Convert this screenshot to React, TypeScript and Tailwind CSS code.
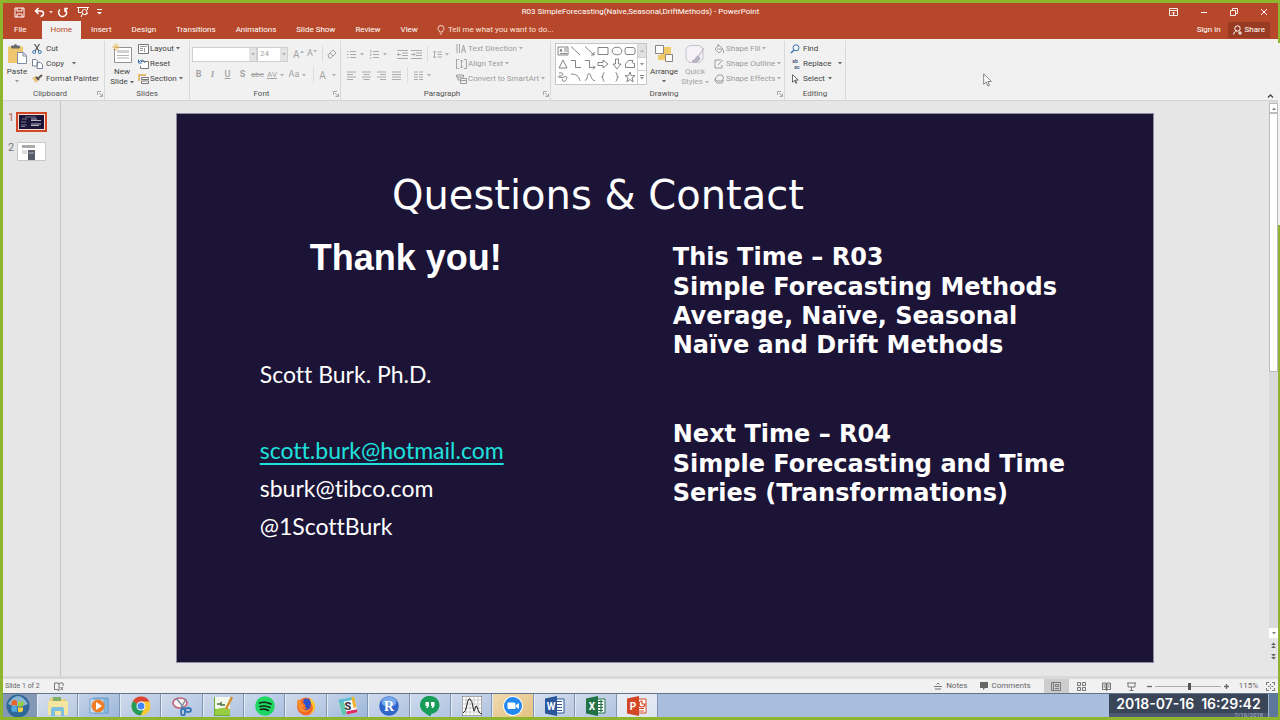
import type { ReactNode } from "react";

const ui = "font-['Roboto','Open_Sans',sans-serif]";

function Ico({ children, w = 12, h = 12, className = "", fill = "none" }: { children: ReactNode; w?: number; h?: number; className?: string; fill?: string }) {
    return (
        <svg width={w} height={h} viewBox={`0 0 ${w} ${h}`} fill={fill} stroke="currentColor" className={`shrink-0 ${className}`} aria-hidden="true">
            {children}
        </svg>
    );
}

function Caret({ className = "" }: { className?: string }) {
    return (
        <svg width="4" height="3" viewBox="0 0 4 3" className={`shrink-0 opacity-80 ${className}`} aria-hidden="true">
            <path d="M0 0h4L2 2.4z" fill="currentColor" />
        </svg>
    );
}

function Group({ label, width, launcher, children }: { label: string; width: string; launcher?: boolean; children: ReactNode }) {
    return (
        <section className={`flex flex-col shrink-0 border-r border-[#d9d9d9] ${width}`}>
            <div className="flex h-[47px]">{children}</div>
            <div className="flex h-[13px] items-center">
                <h2 className="flex-1 pt-px text-center text-[#555]">{label}</h2>
                {launcher && (
                    <button aria-label={`${label} settings`} className="mr-px pt-px text-[#888]">
                        <Ico w={6} h={6}><path d="M.5 4V.5H4M2 2l3 3M5.500 2.500v3h-3" strokeWidth=".7" /></Ico>
                    </button>
                )}
            </div>
        </section>
    );
}

function Item({ icon, text, caret, gap = "gap-1", far }: { icon: ReactNode; text: string; caret?: boolean; gap?: string; far?: boolean }) {
    return (
        <button className={`flex h-[15px] items-center whitespace-nowrap ${gap}`}>
            <span className="flex w-3 shrink-0 justify-center">{icon}</span>
            <span>{text}</span>
            {caret && <Caret className={far ? "ml-[5px]" : "ml-px"} />}
        </button>
    );
}

const tabs = ["Insert", "Design", "Transitions", "Animations", "Slide Show", "Review", "View"];

function TitleBar() {
    return (
        <header className="flex h-[18px] items-center bg-[#b7472a] text-white">
            <div className="flex w-[200px] items-center pl-[11px]">
                <button aria-label="Save"><Ico w={11} h={11}><path d="M1 1h9v9H1zM3 1v3h5V1M3 10V7h5v3" /></Ico></button>
                <button aria-label="Undo" className="ml-[9px]"><Ico w={11} h={11}><path d="M4.500 1L1.500 4l3 3M2 4h4.500c4 0 4 5 0 5.500" strokeWidth="1.500" /></Ico></button>
                <Caret className="ml-1" />
                <button aria-label="Repeat" className="ml-1"><Ico w={11} h={11}><path d="M3 2.500a4 4 0 1 0 4.500-.5M8 5V1.500h3" strokeWidth="1.500" /></Ico></button>
                <button aria-label="Start from beginning" className="ml-[9px]"><Ico w={12} h={12}><path d="M0 1.500h12M1.500 2v4.500h3M10.500 2v2M4 11l2-4" /><circle cx="7.500" cy="6" r="2.500" /><path d="M8 9l3-2" /></Ico></button>
                <button aria-label="Customize toolbar" className="ml-2"><Ico w={5} h={6}><path d="M0 .5h5" /><path d="M0 3h5L2.500 5.500z" fill="currentColor" stroke="none" /></Ico></button>
            </div>
            <h1 className="flex-1 text-center text-[8px]">R03 SimpleForecasting(Naive,Seasonal,DriftMethods) - PowerPoint</h1>
            <div className="flex w-[200px] items-center justify-end gap-[22px] pr-[10px]">
                <button aria-label="Ribbon display options"><Ico w={9} h={8}><path d="M.5.5h8v7h-8zM.5 2.500h8M4.500 7V4M3 5.500l1.500-1.500L6 5.500" strokeWidth=".9" /></Ico></button>
                <button aria-label="Minimize"><Ico w={8} h={8}><path d="M1 4.500h6" /></Ico></button>
                <button aria-label="Restore"><Ico w={8} h={8}><path d="M.5 2.500h5v5h-5zM2.500 2.500v-2h5v5h-2" strokeWidth=".9" /></Ico></button>
                <button aria-label="Close"><Ico w={8} h={8}><path d="M1 1l6 6M7 1L1 7" /></Ico></button>
            </div>
        </header>
    );
}

function TabBar() {
    return (
        <nav className="flex h-[18px] items-center bg-[#b7472a] text-[8px] text-white">
            <button className="h-full px-[11px]">File</button>
            <button className="ml-1 h-full bg-[#f1f1f1] px-[9px] text-[#b7472a]">Home</button>
            {tabs.map((t) => (
                <button key={t} className="h-full whitespace-nowrap px-[10px]">{t}</button>
            ))}
            <label className="ml-[9px] flex items-center gap-[3px] text-[#fbe3dc]">
                <Ico w={8} h={10}><path d="M2.500 7C2.500 5.500 1 5 1 3.500a3 3 0 0 1 6 0C7 5 5.500 5.500 5.500 7zM3 9h2" strokeWidth=".9" /></Ico>
                <input className="w-[140px] bg-transparent placeholder:text-[#fbe3dc]" placeholder="Tell me what you want to do..." />
            </label>
            <button className="ml-auto mr-[7px]">Sign in</button>
            <button className="mr-2 flex h-4 items-center gap-[3px] bg-[#983b22] px-[5px]">
                <Ico w={9} h={10}><circle cx="4.500" cy="3.500" r="2.700" /><path d="M.7 9.500c0-2 1.300-3.500 3-3.500M5 8h4M7 6v4" /></Ico>
                Share
            </button>
        </nav>
    );
}

const bars = (d: string) => <Ico w={9} h={9}><path d={d} strokeWidth=".9" /></Ico>;

function Drop({ label, value, width }: { label: string; value: string; width: string }) {
    return (
        <div className={`relative h-[15px] ${width}`}>
            <select aria-label={label} disabled defaultValue={value} className="h-full w-full appearance-none border border-[#cfcfcf] bg-white bg-[linear-gradient(#e3e3e3,#e3e3e3)] bg-[length:7px_100%] bg-right bg-no-repeat pl-[2px] opacity-100">
                <option>{value}</option>
            </select>
            <Caret className="pointer-events-none absolute right-[2px] top-[6px]" />
        </div>
    );
}

function FontGroup() {
    return (
        <Group label="Font" width="w-[151px]" launcher>
            <div className="flex flex-col pl-[2px] text-[#a3a3a3]">
                <div className="flex h-[26px] items-center">
                    <Drop label="Font" value="" width="w-[65px]" />
                    <Drop label="Font size" value="24" width="w-[31px]" />
                    <button aria-label="Increase font size" className="ml-[5px] flex w-[14px] items-center text-[10px]">A<Caret className="mb-[6px] rotate-180" /></button>
                    <button aria-label="Decrease font size" className="flex w-[14px] items-center text-[9px]">A<Caret className="mb-[6px]" /></button>
                    <span className="ml-px h-4 border-l border-[#ddd]"></span>
                    <button aria-label="Clear formatting" className="ml-1"><Ico w={10} h={10}><path d="M1 6l5-5 3 3-5 5H2zM3 4l3 3" /></Ico></button>
                </div>
                <div className="flex h-4 items-center text-center text-[9px]">
                    <button className="w-[13px] font-bold">B</button>
                    <button className="w-[15px] font-['Liberation_Serif',serif] font-bold italic">I</button>
                    <button className="w-[15px] font-medium underline">U</button>
                    <button className="w-[15px] font-bold">S</button>
                    <button className="w-[15px] text-[8px] line-through">abc</button>
                    <button className="flex w-[21px] items-center justify-center gap-[3px] text-[8px]"><span className="underline">AV</span><Caret /></button>
                    <button className="flex w-[23px] items-center justify-center gap-[3px]">Aa<Caret /></button>
                    <span className="ml-1 h-4 border-l border-[#ddd]"></span>
                    <button className="flex w-[27px] items-center justify-center gap-[6px] text-[10px]">A<Caret /></button>
                </div>
            </div>
        </Group>
    );
}

function ParagraphGroup() {
    return (
        <Group label="Paragraph" width="w-[210px]" launcher>
            <div className="flex w-[114px] flex-col pl-[6px] text-[#a3a3a3]">
                <div className="flex h-[26px] items-center">
                    <button aria-label="Bullets" className="flex items-center gap-1">{bars("M0 1.500h1.500M0 4.500h1.500M0 7.500h1.500M3 1.500h6M3 4.500h6M3 7.500h6")}<Caret /></button>
                    <button aria-label="Numbering" className="ml-[6px] flex items-center gap-1">{bars("M.8 0v2.500M.8 3.500v2.500M.8 7v2M3 1.500h6M3 4.500h6M3 7.500h6")}<Caret /></button>
                    <button aria-label="Decrease indent" className="ml-[10px]"><Ico w={11} h={9}><path d="M0 .5h11M5 3h6M5 5.500h6M0 8.500h11M4 4.500H0M2 3L.5 4.500 2 6" strokeWidth=".9" /></Ico></button>
                    <button aria-label="Increase indent" className="ml-[3px]"><Ico w={11} h={9}><path d="M0 .5h11M5 3h6M5 5.500h6M0 8.500h11M0 4.500h4M2.500 3L4 4.500 2.500 6" strokeWidth=".9" /></Ico></button>
                    <span className="mx-[5px] h-4 border-l border-[#ddd]"></span>
                    <button aria-label="Line spacing" className="flex items-center gap-[3px]">{bars("M1.500 1v7M0 2.500L1.500 1 3 2.500M0 6.500L1.500 8 3 6.500M4.500 2h4.500M4.500 4.500h4.500M4.500 7h4.500")}<Caret /></button>
                </div>
                <div className="flex h-4 items-center gap-[6px]">
                    <button aria-label="Align left">{bars("M0 1h9M0 3.500h6M0 6h9M0 8.500h6")}</button>
                    <button aria-label="Center">{bars("M0 1h9M1.500 3.500h6M0 6h9M1.500 8.500h6")}</button>
                    <button aria-label="Align right">{bars("M0 1h9M3 3.500h6M0 6h9M3 8.500h6")}</button>
                    <button aria-label="Justify">{bars("M0 1h9M0 3.500h9M0 6h9M0 8.500h9")}</button>
                    <span className="h-4 border-l border-[#ddd]"></span>
                    <button aria-label="Columns" className="flex items-center gap-1">{bars("M0 1h4M0 3.500h4M0 6h4M0 8.500h4M5 1h4M5 3.500h4M5 6h4M5 8.500h4")}<Caret /></button>
                </div>
            </div>
            <div className="flex flex-col text-[#9c9c9c]">
                <Item caret gap="gap-px" text="Text Direction" icon={<Ico w={10} h={10}><path d="M1 0v9M3.500 0v9M5.500 9L7.500 1l2 8M6 6h3" strokeWidth=".9" /></Ico>} />
                <Item caret gap="gap-px" text="Align Text" icon={<Ico w={11} h={10}><path d="M3 .5H.5v9H3M8 .5h2.500v9H8M5.500 1v8M4 2.500L5.500 1 7 2.500M4 7.500L5.500 9 7 7.500" strokeWidth=".9" /></Ico>} />
                <Item caret gap="gap-px" text="Convert to SmartArt" icon={<Ico w={11} h={10}><path d="M.5 1h7v2h-7zM2 3v3h2M4.500 4.500h6v5h-6zM4.500 6.500h6" /></Ico>} />
            </div>
        </Group>
    );
}

const shapes = [
    ["Text box", "M1 2h10v8H1zM3 7l1-3 1 3M7 4h3M7 6h3M3 8.500h7"],
    ["Line", "M1 1.500L10 10"],
    ["Arrow", "M1 1.500L10 10M10 7v3H7"],
    ["Rectangle", "M1 2.500h10v7H1z"],
    ["Oval", "M6 2.200c6.500 0 6.500 7.600 0 7.600s-6.500-7.600 0-7.600z"],
    ["Rounded rectangle", "M3 2.500h6q2 0 2 2v3q0 2-2 2H3q-2 0-2-2v-3q0-2 2-2z"],
    ["Triangle", "M6 2l4 8H2z"],
    ["Elbow connector", "M1 2.500h4.500v7H11"],
    ["Elbow arrow", "M1 2.500h4.500v7H11M9 7.500l2 2-2 2"],
    ["Right arrow", "M1 4.500h5V2l5 4-5 4V7.500H1z"],
    ["Down arrow", "M4.500 1v5H2l4 5 4-5H7.500V1z"],
    ["Flowchart shape", "M1.500 9.500V6l3-3.500H9q-2 3 1.500 3v4z"],
    ["Freeform", "M2 2c5-1 5 3 1 3s0 3 4 1 3 3 1 4-4-1-2-2"],
    ["Arc", "M1 3c5 0 8 2 9 7"],
    ["Curve", "M1 9.500C4 9 3 2.500 5 2.500S7 10 11 9.500"],
    ["Left brace", "M7.500 1.500Q6 1.500 6 4T4.500 6Q6 6 6 8t1.500 2.500"],
    ["Right brace", "M4.500 1.500Q6 1.500 6 4t1.500 2Q6 6 6 8t-1.500 2.500"],
    ["Star", "M6 1l1.300 3.700H11L8 7l1.200 3.800L6 8.500l-3.200 2.300L4 7 1 4.700h3.700z"],
];

function DrawingGroup() {
    return (
        <Group label="Drawing" width="w-[234px]" launcher>
            <div className="ml-1 mt-[2px] flex h-[42px] border border-[#c6c6c6] bg-white text-[#666]">
                <div className="grid w-[81px] grid-cols-6">
                    {shapes.map(([name, d]) => (
                        <button key={name} aria-label={name} className="flex items-center justify-center"><Ico><path d={d} strokeWidth=".8" /></Ico></button>
                    ))}
                </div>
                <div className="flex w-[9px] flex-col border-l border-[#d0d0d0] text-[#777]">
                    <button aria-label="Previous shapes" className="flex flex-1 items-center justify-center bg-[#e1e1e1] text-[#aaa]"><Caret className="rotate-180" /></button>
                    <button aria-label="Next shapes" className="flex flex-1 items-center justify-center border-y border-[#d0d0d0]"><Caret /></button>
                    <button aria-label="All shapes" className="flex flex-1 flex-col items-center justify-center gap-px"><span className="w-1 border-t border-[#777]"></span><Caret /></button>
                </div>
            </div>
            <button className="flex w-[34px] flex-col items-center pt-[2px] text-[#444]">
                <Ico w={20} h={22}>
                    <path d="M7 4h10v10H7z" fill="#f2c968" stroke="none" />
                    <path d="M1.500 2.500h8v8h-8zM11.500 11.500h7v7h-7z" fill="#fff" stroke="#8d8480" />
                    <path d="M4 12h7v5H4z" fill="#f2c968" stroke="none" />
                </Ico>
                <span className="mt-[2px] leading-[10px]">Arrange</span>
                <Caret className="mt-[3px]" />
            </button>
            <button className="flex w-[28px] flex-col items-center pt-[2px] text-[#a3a3a3]">
                <Ico w={20} h={22}>
                    <rect x="1" y="2.500" width="17" height="17" rx="5" fill="#f4f2f7" stroke="#c5c1cc" />
                    <path d="M19 5l-6 9M13 13c-2 0-2 4-6 5 3 2 7 1 8-3z" fill="#b9b3c6" stroke="#b0abb9" />
                </Ico>
                <span className="mt-[2px] leading-[10px]">Quick</span>
                <span className="flex items-center gap-[2px] leading-[10px]">Styles<Caret /></span>
            </button>
            <div className="ml-1 flex flex-col text-[#9c9c9c]">
                <Item caret gap="gap-px" text="Shape Fill" icon={<Ico w={10} h={10}><path d="M1 5l4-4 4 4-4 4zM3 5h5M4 3V0M9.500 6v3" strokeWidth=".9" /></Ico>} />
                <Item caret gap="gap-px" text="Shape Outline" icon={<Ico w={10} h={10}><path d="M7 1H1v8h7V6M4 6l5-5" /></Ico>} />
                <Item caret gap="gap-px" text="Shape Effects" icon={<Ico w={10} h={10}><path d="M4 1h4l1.500 3L8 7H3L1 5zM1 5v2l2 2h5l1.500-3" /></Ico>} />
            </div>
        </Group>
    );
}

function Ribbon() {
    return (
        <div className="flex h-[62px] border-b border-[#d4d4d4] bg-[#f1f1f1] pt-[2px] text-[8px] text-[#444]">
            <Group label="Clipboard" width="w-[102px]" launcher>
                <button className="flex w-[28px] flex-col items-center pt-[2px]">
                    <Ico w={20} h={22}>
                        <path d="M1 3.500h15V20H1z" fill="#efc76f" stroke="none" />
                        <path d="M4.500 5V3h2q2-3 4 0h2v2z" fill="#6a6a6a" stroke="#6a6a6a" />
                        <path d="M10.500 9.500h6l3 3v8h-9zM16 9.500V13h3" fill="#fff" stroke="#7c8da4" />
                    </Ico>
                    <span className="mt-[2px] leading-[10px]">Paste</span>
                    <Caret className="mt-[3px] text-[#888]" />
                </button>
                <div className="flex flex-col">
                    <Item text="Cut" gap="gap-[3px]" icon={<Ico w={10} h={10}><path d="M2.500 0L7 7M7.500 0L3 7" stroke="#555" strokeWidth="1.200" /><circle cx="2.200" cy="8" r="1.500" stroke="#3c74b4" /><circle cx="7.800" cy="8" r="1.500" stroke="#3c74b4" /></Ico>} />
                    <Item text="Copy" gap="gap-[3px]" caret far icon={<Ico w={11} h={10}><path d="M.5.5H4L5.500 2v5h-5zM5 3.500h3.500l2 2v4H5z" fill="#fff" stroke="#71819c" /></Ico>} />
                    <Item text="Format Painter" gap="gap-[3px]" icon={<Ico w={11} h={10}><path d="M0 4l4-2 3 3-3 4z" fill="#edc27b" stroke="none" /><path d="M4 3l3 3M6 4.500L10 1" stroke="#5b5552" strokeWidth="1.800" /></Ico>} />
                </div>
            </Group>
            <Group label="Slides" width="w-[85px]">
                <button className="flex w-[32px] flex-col items-center pl-[2px] pt-[2px]">
                    <Ico w={20} h={22}>
                        <path d="M2.500 4.500h17v15h-17z" fill="#fff" stroke="#929292" />
                        <path d="M5 7h12v3H5z" fill="#d0d0d0" stroke="none" />
                        <path d="M5 12.500h12M5 15h12" stroke="#b3b3b3" />
                        <path d="M4 0v8M0 4h8M1.500 1.500l5 5M6.500 1.500l-5 5" stroke="#e9bd60" strokeWidth=".9" />
                    </Ico>
                    <span className="mt-[2px] leading-[10px]">New</span>
                    <span className="flex items-center gap-[2px] leading-[10px]">Slide<Caret /></span>
                </button>
                <div className="flex flex-col">
                    <Item caret gap="gap-px" text="Layout" icon={<Ico w={11} h={10}><path d="M.5.5h10v9H.500z" fill="#fff" stroke="#777" /><path d="M2 2.500h7M2 4.500h3M2 6.500h3M6.500 4v4" stroke="#999" /></Ico>} />
                    <Item gap="gap-px" text="Reset" icon={<Ico w={11} h={10}><path d="M3 2.500h7.500v7h-8V7" fill="#fff" stroke="#777" /><path d="M1 3c2-3 6-2 6 1M.5.5V4H4" stroke="#3c74b4" /></Ico>} />
                    <Item caret gap="gap-px" text="Section" icon={<Ico w={11} h={10}><path d="M3.500 3.500h7v2h-7zM3.500 7h7v2.500h-7z" fill="#fff" stroke="#777" /><path d="M0 1h8M1 2v5" stroke="#e0a848" strokeWidth="1.500" /></Ico>} />
                </div>
            </Group>
            <FontGroup />
            <ParagraphGroup />
            <DrawingGroup />
            <Group label="Editing" width="w-[61px]">
                <div className="flex flex-col pl-1">
                    <Item gap="gap-[2px]" text="Find" icon={<Ico w={10} h={10}><circle cx="6" cy="3.800" r="3" stroke="#3f73b0" /><path d="M4 6L1 9" stroke="#3f73b0" strokeWidth="1.500" /></Ico>} />
                    <Item gap="gap-[2px]" caret far text="Replace" icon={<span className="flex flex-col text-[5px] font-bold leading-[6px] text-[#4d5b7c]"><span>ab</span><span className="pl-1">ac</span></span>} />
                    <Item gap="gap-[2px]" caret text="Select" icon={<Ico w={8} h={10}><path d="M1.500.8v7.500l2-2 1.300 3 1-.5-1.300-2.800h2.700z" strokeWidth=".8" fill="#fff" /></Ico>} />
                </div>
            </Group>
            <button aria-label="Collapse the ribbon" className="mb-px ml-auto mr-1 self-end"><Ico w={7} h={6}><path d="M1 4.500L3.500 2 6 4.500" strokeWidth="1.300" /></Ico></button>
        </div>
    );
}

function Thumbnails() {
    return (
        <aside className="flex w-[58px] shrink-0 flex-col gap-[10px] border-r border-[#c6c6c6] pl-[5px] pt-[11px] text-[11px] text-[#777]">
            <button className="flex items-start gap-[2px] leading-[12px]">
                <span className="w-[6px] text-[#b7654f]">1</span>
                <svg width="31" height="20" viewBox="0 0 31 20" aria-label="Slide 1">
                    <path d="M0 0h31v20H0z" fill="#d24726" />
                    <path d="M2 2h27v16H2z" fill="#f5ded6" />
                    <path d="M3 3h25v14H3z" fill="#1c1437" />
                    <path d="M9 5h11M6 7h5M5 10h5M5 13h6M5 14.500h4" stroke="#8f8ba8" strokeWidth=".8" />
                    <path d="M15 7h6M15 8.500h10M15 12h10M15 13.500h8" stroke="#dcdae6" strokeWidth=".8" />
                </svg>
            </button>
            <button className="flex items-start gap-[3px] leading-[12px]">
                <span className="w-[6px]">2</span>
                <svg width="29" height="19" viewBox="0 0 29 19" aria-label="Slide 2">
                    <path d="M.5.5h28v18H.500z" fill="#fff" stroke="#c8c8c8" />
                    <path d="M5 3h13v3H5z" fill="#aaa" />
                    <path d="M11 8h7v10h-7z" fill="#555d68" />
                    <path d="M5 9h5M5 11h5M12 11h5" stroke="#bbb" />
                </svg>
            </button>
        </aside>
    );
}

function Slide() {
    return (
        <article className="aspect-[978/550] w-[81%] self-start border border-[#8f8ca0] bg-[#1c1437] pt-[57px] text-white">
            <h2 className="pr-[134px] text-center font-['DejaVu_Sans',sans-serif] text-[40px] leading-[48px]">Questions &amp; Contact</h2>
            <div className="flex">
                <div className="w-[496px] shrink-0 pl-[83px]">
                    <h3 className="pl-[50px] pt-[15px] font-['Liberation_Sans',sans-serif] text-[36px] font-bold leading-[48px]">Thank you!</h3>
                    <div className="pt-[73px] font-['Lato',sans-serif] text-[23px] leading-[38px] [font-variant-ligatures:none]">
                        <p>Scott Burk. Ph.D.</p>
                        <p className="pt-[38px]"><a href="mailto:scott.burk@hotmail.com" className="text-[#1fe0dc] underline decoration-2 underline-offset-4">scott.burk@hotmail.com</a></p>
                        <p>sburk@tibco.com</p>
                        <p>@1ScottBurk</p>
                    </div>
                </div>
                <div className="pt-[24px] font-['DejaVu_Sans',sans-serif] text-[24px] font-bold leading-[29px]">
                    <p>This Time – R03</p>
                    <p className="pt-px">Simple Forecasting Methods<br />Average, Naïve, Seasonal<br />Naïve and Drift Methods</p>
                    <p className="pt-[60px]">Next Time – R04</p>
                    <p className="pt-px">Simple Forecasting and Time<br />Series (Transformations)</p>
                </div>
            </div>
        </article>
    );
}

function Scroller() {
    return (
        <div className="flex w-[9px] shrink-0 flex-col items-center bg-[#dadada] text-[#666]">
            <button aria-label="Scroll up" className="mt-[2px] flex h-[10px] w-full items-center justify-center border border-[#bbb] bg-white"><Caret className="rotate-180" /></button>
            <div className="h-[259px] w-full border border-[#bbb] bg-white"></div>
            <button aria-label="Scroll down" className="mt-auto flex h-[10px] w-full items-center justify-center bg-white"><Caret /></button>
            <div className="flex w-full flex-col items-center gap-[6px] bg-[#e6e6e6] pb-4 pt-1">
                <button aria-label="Previous slide"><Ico w={5} h={6}><path d="M0 3L2.500.500 5 3zM0 6l2.500-2.500L5 6z" fill="currentColor" stroke="none" /></Ico></button>
                <button aria-label="Next slide"><Ico w={5} h={6}><path d="M0 0h5L2.500 2.500zM0 3h5L2.500 5.500z" fill="currentColor" stroke="none" /></Ico></button>
            </div>
        </div>
    );
}

function StatusBar() {
    return (
        <footer className="flex h-[17px] items-center border-t-[3px] border-[#d9d9d9] bg-[#f1f1f1] pl-[2px] text-[8px] text-[#666]">
            <span className="text-[7px]">Slide 1 of 2</span>
            <button aria-label="Spelling" className="ml-[14px]"><Ico w={10} h={9}><path d="M5 1.500v7M5 1.500Q3 .5.500 1v6.500Q3 7 5 8.500M5 1.500Q7 .5 9 1v3M6.500 5l2.500 3M9 5L6.500 8" strokeWidth=".9" /></Ico></button>
            <button className="ml-auto flex items-center gap-1"><Ico w={8} h={8}><path d="M0 4.500h8M1 7h6M2.500 2.500L4 1l1.500 1.500" strokeWidth=".9" /></Ico>Notes</button>
            <button className="ml-[13px] flex items-center gap-[3px]"><Ico w={8} h={8}><path d="M0 0h8v6H5L3 8V6H0z" fill="currentColor" stroke="none" /></Ico>Comments</button>
            <button aria-label="Normal view" className="ml-[13px] flex h-full w-[25px] items-center justify-center bg-[#cdcdcd]"><Ico w={10} h={9}><path d="M.5.5h9v8h-9zM2.500.5v8M4.500 2.500h3v2h-3zM4 6.500h4" strokeWidth=".8" /></Ico></button>
            <button aria-label="Slide sorter" className="flex w-[25px] justify-center"><Ico w={9} h={9}><path d="M.5.5h3v3h-3zM5.500.5h3v3h-3zM.5 5.500h3v3h-3zM5.500 5.500h3v3h-3z" strokeWidth=".9" /></Ico></button>
            <button aria-label="Reading view" className="flex w-[25px] justify-center"><Ico w={9} h={9}><path d="M.5 1h3.500v6.500H.500zM5 1h3.500v6.500H5zM4.500 1v8M1.500 3h1.500M1.500 5h1.500M6 3h1.500M6 5h1.500" strokeWidth=".9" /></Ico></button>
            <button aria-label="Slide show" className="flex w-[25px] justify-center"><Ico w={9} h={9}><path d="M0 1h9M1 1v4h7V1M4.500 5v3M2.500 8.500h4" strokeWidth=".9" /></Ico></button>
            <button aria-label="Zoom out" className="ml-[3px]"><Ico w={5} h={5}><path d="M0 2.500h5" strokeWidth="1.300" /></Ico></button>
            <input
                type="range"
                aria-label="Zoom"
                min={0}
                max={100}
                defaultValue={53}
                className="mx-[3px] h-[7px] w-[66px] appearance-none bg-[linear-gradient(#aaa,#aaa)] bg-[length:100%_1px] bg-center bg-no-repeat [&::-webkit-slider-thumb]:h-[7px] [&::-webkit-slider-thumb]:w-[3px] [&::-webkit-slider-thumb]:appearance-none [&::-webkit-slider-thumb]:bg-[#555]"
            />
            <button aria-label="Zoom in"><Ico w={5} h={5}><path d="M0 2.500h5M2.500 0v5" strokeWidth="1.300" /></Ico></button>
            <span className="ml-[10px]">115%</span>
            <button aria-label="Fit slide" className="ml-2 mr-[3px]"><Ico w={9} h={9}><path d="M.5 3V.5H3M6 .5h2.500V3M8.500 6v2.500H6M3 8.500H.500V6M4.500 2v1.500M4.500 5.500V7M2 4.500h1.500M5.500 4.500H7" strokeWidth=".9" /></Ico></button>
        </footer>
    );
}

function OfficeIcon({ letter, color, detail }: { letter: string; color: string; detail: string }) {
    return (
        <svg width="20" height="20" viewBox="0 0 20 20" aria-hidden="true">
            <path d="M9 3h10v14H9z" fill="#fff" stroke={color} />
            <path d={detail} stroke={color} strokeWidth="1.200" fill="none" />
            <path d="M0 2.500L12 0v20L0 17.500z" fill={color} />
            <text x="6" y="14" fontSize="10" fontWeight="700" textAnchor="middle" fill="#fff">{letter}</text>
        </svg>
    );
}

const apps: { name: string; look: string; icon: ReactNode }[] = [
    {
        name: "Explorer", look: "bg-[#b9c9e2]",
        icon: <><path d="M2 2l7-1 1 2h8v15H2z" fill="#e5cf7c" /><path d="M5 1h8v4H5z" fill="#7fae67" /><path d="M-1 5h21v14H-1z" fill="#f4e5a0" /><path d="M3 20v-7q0-2 2-2h9q2 0 2 2v7h-3v-5H7v5z" fill="#7ebede" /></>,
    },
    {
        name: "Media Player", look: "bg-[#9db6da]",
        icon: <><path d="M4 2h15v15H4z" fill="#8bb9df" stroke="#629acb" /><path d="M1 3h14v14H1z" fill="#cadff0" stroke="#71a5cf" /><circle cx="9" cy="10" r="6.500" fill="#ef7d27" /><path d="M7 6l6 4-6 4z" fill="#fff" /></>,
    },
    {
        name: "Chrome", look: "bg-[#b0c3e0]",
        icon: <><circle cx="10" cy="10" r="9.500" fill="#f6c833" /><path d="M10 10L1.800 5.200A9.500 9.500 0 0 1 18.500 5.500H10z" fill="#db4437" /><path d="M10 10L1.800 5.200A9.500 9.500 0 0 0 9.500 19.500l4-7.500z" fill="#249b59" /><circle cx="10" cy="10" r="4.500" fill="#fff" /><circle cx="10" cy="10" r="3.500" fill="#4285f4" /></>,
    },
    {
        name: "Snipping Tool", look: "bg-[#b0c3e0]",
        icon: <><ellipse cx="8" cy="7" rx="7" ry="5" fill="#f7f1f4" stroke="#c15a70" strokeWidth="1.500" /><path d="M4 2l9 11M14 3L9 12" stroke="#7e8b9c" strokeWidth="1.500" /><ellipse cx="11" cy="16" rx="2" ry="3.500" fill="none" stroke="#3978b6" strokeWidth="1.800" /><ellipse cx="16" cy="14" rx="3" ry="2" fill="none" stroke="#3978b6" strokeWidth="1.800" /></>,
    },
    {
        name: "Notes editor", look: "bg-[#b0c3e0]",
        icon: <><path d="M1 1h16v19H1z" fill="#67ac3b" /><path d="M2 1h15v12H2z" fill="#f4f8ed" /><path d="M2 14q7-4 15-1v6H2z" fill="#98cd42" /><path d="M4 8h3l1-1v2h4" stroke="#4b713e" strokeWidth="1.500" fill="none" /><path d="M19 1l-6 12" stroke="#d3922e" strokeWidth="2.500" /></>,
    },
    {
        name: "Spotify", look: "bg-[#a9bfe0]",
        icon: <><circle cx="10" cy="10" r="9.800" fill="#1ed760" /><path d="M4.500 7q6-2 11.500 1M5 10.500q5-1.500 10 1M5.500 13.500q4-1 8 1" stroke="#142519" strokeWidth="1.600" fill="none" strokeLinecap="round" /></>,
    },
    {
        name: "Firefox", look: "bg-[#b0c3e0]",
        icon: <><circle cx="10" cy="10.500" r="9" fill="#f4682a" /><path d="M14 2c7 4 7 13-1 17 5-4 5-10 1-13z" fill="#ffcb33" /><path d="M8 3q5-2 7 3l-1 6q-3 4-7 2 3 0 4-2-2 0-2-3L7 6z" fill="#3052c8" /><path d="M2 3q1 2 4 2c-2 2 0 4 3 4-1 2-2 2-3 2 1 4 6 4 8 1-1 5-8 6-11 1Q0 8 2 3z" fill="#fb8a29" /></>,
    },
    {
        name: "Slack", look: "bg-[#9db6da]",
        icon: <><g transform="rotate(-12 10 10)"><path d="M2 2h16v16H2z" fill="#fff" /><path d="M2 2h5v16H2z" fill="#62c7b0" /><path d="M2 2h16v3H2z" fill="#5bbbd4" /><path d="M15 2h3v11h-3z" fill="#edb331" /><path d="M7 15h11v3H7z" fill="#dc2d64" /></g><text x="10" y="14" fontSize="11" fontWeight="700" textAnchor="middle" fill="#352939">S</text></>,
    },
    {
        name: "RStudio", look: "bg-[#b0c3e0]",
        icon: <><circle cx="10" cy="10" r="9.800" fill="#2f64c8" /><ellipse cx="10" cy="6" rx="7.500" ry="5" fill="#78a9ed" /><text x="10" y="15" fontSize="14" fontWeight="700" fontFamily="Liberation Serif" textAnchor="middle" fill="#fff">R</text></>,
    },
    {
        name: "Hangouts", look: "bg-[#b0c3e0]",
        icon: <><path d="M10 0a9 9 0 0 1 1 18v2.500Q7 19 5 17A9 9 0 0 1 10 0z" fill="#179d58" /><path d="M5.500 6h3.500v4l-1.500 2H6l1-2H5.500zM11 6h3.500v4L13 12h-1.500l1-2H11z" fill="#fff" /></>,
    },
    {
        name: "Signal plot", look: "bg-[#b0c3e0]",
        icon: <><path d="M0 0h20v20H0z" fill="#fff" stroke="#555" /><path d="M4 0v20M8 0v20M12 0v20M16 0v20M0 4h20M0 8h20M0 12h20M0 16h20" stroke="#b8b8b8" strokeWidth=".7" /><path d="M1 17q3-1 4-8T8 3t3 8 2 2 2-2 2 5 3 2" stroke="#222" fill="none" /></>,
    },
    {
        name: "Zoom", look: "bg-[#e4c17e]",
        icon: <><circle cx="10" cy="10" r="10" fill="#fff" /><circle cx="10" cy="10" r="9" fill="#2388ee" /><path d="M4.500 6.500H11q1.500 0 1.500 1.500v5H6q-1.500 0-1.500-1.500zM13 9l3-2v6l-3-2z" fill="#fff" /></>,
    },
];

const taskButton = "flex flex-1 items-center justify-center border-x border-[#8296b3] border-l-[#e4ecf6] bg-linear-to-br from-white/40 to-transparent";

function Taskbar() {
    return (
        <nav aria-label="Taskbar" className="flex h-6 overflow-hidden border-t border-[#62748b] bg-[#a9bddd]">
            <button aria-label="Start" className="flex w-[34px] shrink-0 items-center bg-[#8398b5] pl-[3px]">
                <svg width="24" height="24" viewBox="0 0 24 24" aria-hidden="true">
                    <circle cx="12" cy="12" r="11.500" fill="#2e6899" />
                    <path d="M2 10q10-16 20 0-10 5-20 0z" fill="#8cb6cf" />
                    <path d="M6 7q3-2 5 0v5q-3-2-6 0z" fill="#e9642c" />
                    <path d="M12 7q3 2 6 0l-1 5q-3 1-5 0z" fill="#9acb44" />
                    <path d="M5 13q3-2 6 0v5q-3-1-5 0z" fill="#51a9df" />
                    <path d="M12 13q3 1 5 0v4q-3 2-5 1z" fill="#f6cf42" />
                </svg>
            </button>
            <div className="flex w-[621px]">
                {apps.map((a) => (
                    <button key={a.name} aria-label={a.name} className={`${taskButton} ${a.look}`}>
                        <svg width="20" height="20" viewBox="0 0 20 20" aria-hidden="true">{a.icon}</svg>
                    </button>
                ))}
                <button aria-label="Word" className={`${taskButton} bg-[#b9c9e2]`}><OfficeIcon letter="W" color="#2b579a" detail="M12 5.500h5M12 8.500h5M12 11.500h5M12 14.500h5" /></button>
                <button aria-label="Excel" className={`${taskButton} bg-[#b0c3e0]`}><OfficeIcon letter="X" color="#217346" detail="M12 5.500h5M12 8.500h5M12 11.500h5M12 14.500h5M15 4v12" /></button>
                <button aria-label="PowerPoint" className={`${taskButton} bg-[#dce4ef]`}><OfficeIcon letter="P" color="#d24726" detail="M15 5v3h3a3 3 0 1 1-3-3M12 12.500h5M12 15h5" /></button>
            </div>
            <div className="ml-auto flex bg-[#4a5a72]">
                <div className="flex w-[159px] flex-col">
                    <time className="whitespace-nowrap bg-[#3a4558] text-center font-['Inter',sans-serif] text-[14px] font-semibold leading-[19px] text-white">2018-07-16&nbsp; 16:29:42</time>
                    <span className="pr-[5px] text-right text-[6px] leading-[4px] text-[#a9b5c7]">7/16/2018</span>
                </div>
                <button aria-label="Show desktop" className="w-[10px] border-l border-[#a2b3ca] bg-[#5e789b]"></button>
            </div>
        </nav>
    );
}

export default function App() {
    return (
        <div className={`relative flex min-h-screen flex-col border-[3px] border-r-2 border-[#8fb52e] bg-[#e6e6e6] ${ui}`}>
            <TitleBar />
            <TabBar />
            <Ribbon />
            <main className="flex flex-1">
                <Thumbnails />
                <div className="flex flex-1 justify-center pt-3"><Slide /></div>
                <Scroller />
            </main>
            <StatusBar />
            <Taskbar />
            {/* break in the sharing frame */}
            <span className="absolute -right-[2px] top-10 h-[182px] w-[2px] bg-[#f1f1f1]"></span>
            {/* mouse pointer */}
            <svg className="pointer-events-none absolute left-[980px] top-[70px]" width="9" height="14" viewBox="0 0 9 14" aria-hidden="true">
                <path d="M.7.800v10.500l2.500-2.300 1.700 4 1.600-.7-1.700-3.800h3.500z" fill="#fff" stroke="#666" strokeWidth=".8" />
            </svg>
        </div>
    );
}
